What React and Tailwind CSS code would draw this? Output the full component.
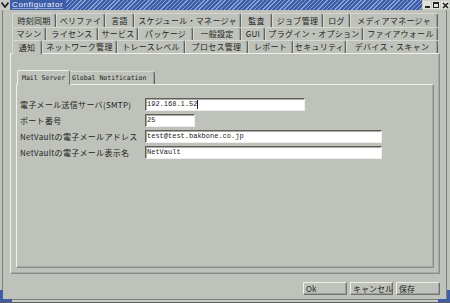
const row1 = [
  ["時刻同期", "w-[44px]"],
  ["ベリファイ", "w-[49px]"],
  ["言語", "w-[29px]"],
  ["スケジュール・マネージャ", "w-[107px]"],
  ["監査", "w-[31px]"],
  ["ジョブ管理", "w-[51px]"],
  ["ログ", "w-[27px]"],
  ["メディアマネージャ", "w-[88px]"],
];

const row2 = [
  ["マシン", "w-[34px]"],
  ["ライセンス", "w-[52px]"],
  ["サービス", "w-[40px]"],
  ["パッケージ", "w-[55px]"],
  ["一般設定", "w-[48px]"],
  ["GUI", "w-[24px]"],
  ["プラグイン・オプション", "w-[98px]"],
  ["ファイアウォール", "w-[75px]"],
];

const row3 = [
  ["通知", "w-[30px]"],
  ["ネットワーク管理", "w-[75px]"],
  ["トレースレベル", "w-[68px]"],
  ["プロセス管理", "w-[63px]"],
  ["レポート", "w-[45px]"],
  ["セキュリティ", "w-[53px]"],
  ["デバイス・スキャン", "w-[92px]"],
];

const fields = [
  { label: "電子メール送信サーバ(SMTP)", value: "192.168.1.52", width: "w-[160px]", cursor: true },
  { label: "ポート番号", value: "25", width: "w-[50px]" },
  { label: "NetVaultの電子メールアドレス", value: "test@test.bakbone.co.jp", width: "w-[237px]" },
  { label: "NetVaultの電子メール表示名", value: "NetVault", width: "w-[237px]" },
];

function TabRow({ tabs, height, selected }) {
  return (
    <div className={`flex pl-[2px] ${height}`}>
      {tabs.map(([name, w], i) => (
        <div
          key={name}
          className={`${w} flex items-center justify-center border-t border-l border-t-[#d6d9d2] border-l-[#d6d9d2] border-r border-r-[#5f625d] rounded-tl-[2px] rounded-tr-[3px] shadow-[inset_-1px_0_0_#9ea19b] text-[8px] tracking-[0.3px] whitespace-nowrap ${
            selected === i ? "relative z-10 -mb-px bg-[#bec2ba]" : ""
          }`}
        >
          {name}
        </div>
      ))}
    </div>
  );
}

function TitleBar() {
  return (
    <div className="h-[10px] flex">
      <div className="w-[10px] bg-[#c9ccc5] flex items-center justify-center">
        <svg width="8" height="6" viewBox="0 0 8 6">
          <path d="M0.5 0.5 L4 5 L7.5 0.5" fill="none" stroke="#1b1b1b" strokeWidth="1.6" />
        </svg>
      </div>
      <div className="flex-1 flex items-center bg-[repeating-linear-gradient(135deg,#3d5da6_0px,#3d5da6_2px,#8aa1d6_2px,#8aa1d6_3px)]">
        <span className="h-full flex items-center pl-[2px] pr-[3px] bg-[#3d5da6] text-[#eef2ff] text-[8px] leading-none font-['Liberation_Sans',sans-serif] tracking-[0.6px] underline decoration-[#8aa1d6]">
          Configurator
        </span>
      </div>
      <div className="w-[28px] bg-[#c9ccc5] flex items-center justify-end gap-px pr-px">
        <div className="w-[8px] h-[8px] bg-[#dfe2db] flex items-end justify-center pb-[1px]">
          <div className="w-[5px] h-[2px] bg-[#222]" />
        </div>
        <div className="w-[8px] h-[8px] bg-[#dfe2db] flex items-center justify-center">
          <div className="w-[6px] h-[6px] border border-[#222] border-t-2" />
        </div>
        <div className="w-[8px] h-[8px] bg-[#dfe2db] flex items-center justify-center">
          <svg width="7" height="7" viewBox="0 0 7 7">
            <path d="M1 1 L6 6 M6 1 L1 6" stroke="#222" strokeWidth="1.6" />
          </svg>
        </div>
      </div>
    </div>
  );
}

function Field({ label, value, width, cursor }) {
  return (
    <div className="h-[13px] flex items-center">
      <div className="w-[125px] text-[8px] leading-none whitespace-nowrap tracking-[0.3px]">{label}</div>
      <div
        className={`${width} h-full flex items-center bg-white border border-t-[#5c5f5a] border-l-[#5c5f5a] border-b-[#eef0eb] border-r-[#eef0eb] shadow-[inset_1px_1px_0_#a9aca6] pl-[1px] font-['Liberation_Mono',monospace] text-[7px] leading-none text-[#222]`}
      >
        <span>{value}</span>
        {cursor && <span className="w-px h-[9px] bg-[#222]" />}
      </div>
    </div>
  );
}

export default function App() {
  return (
    <div className="relative w-[450px] h-[303px] overflow-hidden bg-[#bec2ba] text-[#222] font-['Noto_Sans_CJK_JP',sans-serif] flex flex-col">
      <TitleBar />
      <div className="flex-1 flex flex-col ml-[2px] mr-[3px] border-l border-r border-l-[#7d807a] border-r-[#7d807a] pl-[7px] pr-[6px] pt-[3px]">
        <TabRow tabs={row1} height="h-[14px]" />
        <TabRow tabs={row2} height="h-[13px]" />
        <TabRow tabs={row3} height="h-[13px]" selected={0} />

        <div className="h-[221px] flex flex-col border border-t-[#eef0ea] border-l-[#eef0ea] border-r-[#8a8d87] border-b-[#8a8d87] shadow-[inset_-1px_-1px_0_#a6a9a3] pt-[16px] pl-[5px] pr-[5px] pb-[5px]">
          <div className="h-[14px] flex pl-px font-['DejaVu_Sans_Mono',monospace] text-[6.5px] leading-none">
            <div className="w-[53px] relative z-10 -mb-px bg-[#bec2ba] flex items-center pl-[4px] border-t border-l border-t-[#eef0ea] border-l-[#eef0ea] border-r border-r-[#6f726d] rounded-t-[2px]">
              Mail Server
            </div>
            <div className="w-[85px] mt-[1px] flex items-center pl-[2px] border-t border-t-[#d6d9d2] border-r border-r-[#5f625d] rounded-tr-[3px] shadow-[inset_-1px_0_0_#9ea19b]">
              Global Notification
            </div>
          </div>
          <div className="h-[184px] flex flex-col gap-[3px] border border-t-[#eef0ea] border-l-[#eef0ea] border-r-[#8a8d87] border-b-[#8a8d87] shadow-[inset_-1px_-1px_0_#a6a9a3] pt-[13px] pl-[3px]">
            {fields.map((f) => (
              <Field key={f.label} {...f} />
            ))}
          </div>
        </div>

        <div className="mt-[8px] h-[13px] flex justify-end gap-[3px] text-[8px] leading-none">
          {[
            ["Ok", "w-[44px]"],
            ["キャンセル", "w-[43px]"],
            ["保存", "w-[44px]"],
          ].map(([t, w]) => (
            <div
              key={t}
              className={`${w} flex items-center pl-[2px] border border-t-[#eef0ea] border-l-[#eef0ea] border-r-[#6f726d] border-b-[#6f726d] shadow-[inset_-1px_-1px_0_#9ea19b] whitespace-nowrap`}
            >
              {t}
            </div>
          ))}
        </div>
      </div>
      <div className="h-[4px] border-t border-t-[#7d807a] bg-[#c9ccc5] border-b border-b-[#5c5f5a]" />
      <div className="absolute left-0 bottom-[1px] w-[12px] h-[12px] border-l-[3px] border-b-[3px] border-[#3d5da6]" />
      <div className="absolute right-0 bottom-[1px] w-[12px] h-[12px] border-r-[3px] border-b-[3px] border-[#3d5da6]" />
    </div>
  );
}
